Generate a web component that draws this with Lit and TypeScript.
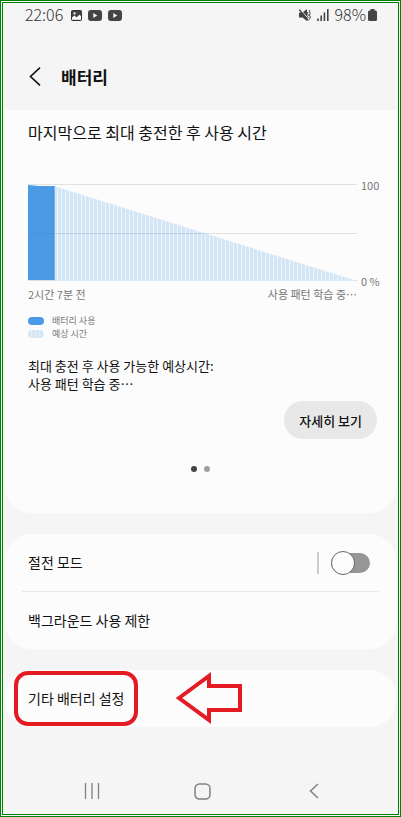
import { LitElement, html, css, svg } from "lit";
import { customElement, state } from "lit/decorators.js";

@customElement("app-root")
export class AppRoot extends LitElement {
  @state() private saving = false;

  static styles = css`
    :host {
      display: block;
      font-family: "Noto Sans CJK KR", "Noto Sans", sans-serif;
      color: #111;
    }
    * { box-sizing: border-box; }
    h1, h2, p { margin: 0; }
    button { font: inherit; color: inherit; border: 0; background: none; padding: 0; cursor: pointer; }
    svg { display: block; flex: none; }
    .screen {
      display: flex;
      flex-direction: column;
      min-height: 100vh;
      border: 3px double #008000;
      background: #f5f5f5;
    }
    .status {
      display: flex;
      align-items: center;
      justify-content: space-between;
      height: 24px;
      padding: 0 21px 0 22px;
      font-size: 16px;
      line-height: 22px;
      font-weight: 300;
      color: #333;
    }
    .group { display: flex; align-items: center; gap: 6px; }
    .time { margin-right: 2px; }
    .time, .percent { padding-bottom: 2px; }
    .level { display: flex; align-items: center; gap: 2px; }
    .header {
      display: flex;
      align-items: center;
      gap: 20px;
      height: 83px;
      padding: 16px 26px 0;
    }
    h1 { font-size: 17px; line-height: 24px; font-weight: 700; }
    main { display: flex; flex-direction: column; gap: 21px; padding: 0 2px; }
    .card { background: #fcfcfc; border-radius: 26px; }
    .usage { border-radius: 0 0 26px 26px; padding: 10px 16px 41px 23px; }
    h2 { font-size: 16px; line-height: 24px; font-weight: 400; }
    .chart {
      display: grid;
      grid-template-columns: 1fr 19px;
      column-gap: 4px;
      margin-top: 40px;
      font-size: 11px;
      line-height: 16px;
      color: #777;
    }
    .plot { width: 100%; height: 99px; }
    .scale {
      display: flex;
      flex-direction: column;
      justify-content: space-between;
      height: 112px;
      margin-top: -7px;
      white-space: nowrap;
    }
    .axis { display: flex; justify-content: space-between; margin-top: -3px; }
    .legend {
      list-style: none;
      margin: 12px 0 0;
      padding: 0;
      font-size: 9px;
      line-height: 13px;
      color: #777;
    }
    .legend li { display: flex; align-items: center; gap: 8px; }
    .swatch { width: 16px; height: 8px; border-radius: 4px; background: #4a9ae6; }
    .swatch.expected { background: repeating-linear-gradient(90deg, #d4e5f4 0 3px, #e6f0f9 3px 4px); }
    .estimate { margin-top: 17px; font-size: 13px; line-height: 18px; }
    .actions { display: flex; justify-content: flex-end; margin-top: 8px; padding-right: 3px; }
    .more {
      height: 38px;
      padding: 0 15px;
      border-radius: 19px;
      background: #e8e8e8;
      font-size: 13px;
      font-weight: 500;
    }
    .dots { display: flex; justify-content: center; gap: 7px; margin-top: 27px; padding-right: 7px; }
    .dot { width: 6px; height: 6px; border-radius: 50%; background: #a0a0a0; }
    .dot.current { background: #444; }
    .row {
      position: relative;
      display: flex;
      align-items: center;
      justify-content: space-between;
      width: 100%;
      height: 57px;
      padding: 0 26px 0 23px;
      font-size: 14px;
      line-height: 20px;
      text-align: left;
    }
    .row > label, .row > .name { padding-bottom: 2px; }
    .rule { height: 1px; margin: 0 17px; background: #e9e9e9; }
    .control { display: flex; align-items: center; gap: 12px; }
    .control::before { content: ""; width: 2px; height: 22px; background: #ccc; }
    .switch {
      appearance: none;
      display: flex;
      align-items: center;
      width: 39px;
      height: 20px;
      margin: 0;
      border-radius: 10px;
      background: #969696;
      cursor: pointer;
    }
    .switch::before {
      content: "";
      width: 22px;
      height: 22px;
      flex: none;
      border: 1px solid #666;
      border-radius: 50%;
      background: #fdfdfd;
    }
    .switch:checked { justify-content: flex-end; background: #4a9ae6; }
    .mark {
      position: absolute;
      left: 9px;
      top: 1px;
      width: 124px;
      height: 55px;
      border: 4px solid #e51b24;
      border-radius: 14px;
      pointer-events: none;
    }
    .arrow { position: absolute; left: 170px; top: 2px; pointer-events: none; }
    nav {
      display: flex;
      justify-content: space-around;
      align-items: center;
      margin-top: auto;
      height: 46px;
      padding: 0 29px 0 34px;
    }
    nav button { display: flex; justify-content: center; width: 40px; }
  `;

  private video() {
    return html`<svg width="14" height="11" viewBox="0 0 14 11" aria-hidden="true">
      <rect width="14" height="11" rx="3" fill="#444" />
      <path d="M5.3 3v5l4-2.5z" fill="#f5f5f5" />
    </svg>`;
  }

  private plot() {
    return html`<svg class="plot" viewBox="0 0 329 99" preserveAspectRatio="none" role="img" aria-label="배터리 사용">
      ${svg`
        <defs>
          <pattern id="stripes" width="4" height="99" patternUnits="userSpaceOnUse">
            <rect width="4" height="99" fill="#ebf4fb" />
            <rect x="2" width="2" height="99" fill="#d4e6f5" />
            <rect width="1" height="99" fill="#d4e6f5" />
          </pattern>
        </defs>
        <path d="M0 .5H329M0 49.500H329M0 96.500H329" stroke="#e2e2e2" />
        <path d="M26 2L329 97H26z" fill="url(#stripes)" />
        <path d="M0 1L11 2H26V96H0z" fill="#4a9ae6" />
        <path d="M26 2V96" stroke="#3c86cc" />
        <path d="M0 49.500H178" stroke="#56789a" stroke-opacity=".2" />
      `}
    </svg>`;
  }

  render() {
    return html`
      <div class="screen">
        <div class="status">
          <div class="group">
            <span class="time">22:06</span>
            <svg width="11" height="11" viewBox="0 0 11 11" aria-hidden="true">
              <rect x=".5" y=".5" width="10" height="10" rx="1" fill="#444" stroke="#333" />
              <circle cx="3.5" cy="3.4" r="1.1" fill="#fff" />
              <path d="M1 9.8V7.5L3.5 5.6L5.6 7.4L8.4 4.8L10 6V9.8z" fill="#fff" />
            </svg>
            ${this.video()} ${this.video()}
          </div>
          <div class="group">
            <svg width="12" height="12" viewBox="0 0 12 12" aria-hidden="true">
              <path d="M0 3.500H3.500L8 0V12L3.500 8.500H0z" fill="#444" />
              <path d="M1.300 .3L10 10.500" stroke="#f5f5f5" />
              <path d="M.3 .7L9.300 11.500" stroke="#444" stroke-width="1.300" />
              <path d="M9 3L8.500 4.500L9.300 6L8.500 7.500L9.200 9M11 1L10.300 2.500L11.300 4.300L10.400 6L11.300 8L10.400 10.500" fill="none" stroke="#444" />
            </svg>
            <svg width="12" height="12" viewBox="0 0 12 12" aria-hidden="true">
              <path d="M1 9.5V12M4.2 6.5V12M7.4 3.5V12M10.8 0V12" stroke="#444" stroke-width="1.6" />
            </svg>
            <span class="level">
              <span class="percent">98%</span>
              <svg width="9" height="12" viewBox="0 0 9 12" aria-hidden="true">
                <path d="M2.5 1.5V0H6.500V1.500H7.500Q9 1.500 9 3V10.500Q9 12 7.500 12H1.500Q0 12 0 10.500V3Q0 1.500 1.500 1.500z" fill="#444" />
              </svg>
            </span>
          </div>
        </div>

        <header class="header">
          <button aria-label="뒤로">
            <svg width="12" height="19" viewBox="0 0 12 19">
              <path d="M11 .7L1.500 9.500L11 18.300" fill="none" stroke="#111" stroke-width="1.600" />
            </svg>
          </button>
          <h1>배터리</h1>
        </header>

        <main>
          <section class="card usage">
            <h2>마지막으로 최대 충전한 후 사용 시간</h2>
            <div class="chart">
              ${this.plot()}
              <div class="scale"><span>100</span><span>0 %</span></div>
              <div class="axis"><span>2시간 7분 전</span><span>사용 패턴 학습 중⋯</span></div>
            </div>
            <ul class="legend">
              <li><span class="swatch"></span>배터리 사용</li>
              <li><span class="swatch expected"></span>예상 시간</li>
            </ul>
            <p class="estimate">최대 충전 후 사용 가능한 예상시간:<br />사용 패턴 학습 중⋯</p>
            <div class="actions"><button class="more">자세히 보기</button></div>
            <div class="dots"><span class="dot current"></span><span class="dot"></span></div>
          </section>

          <section class="card">
            <div class="row">
              <label for="saving">절전 모드</label>
              <span class="control">
                <input
                  id="saving"
                  class="switch"
                  type="checkbox"
                  role="switch"
                  .checked=${this.saving}
                  @change=${(e: Event) => (this.saving = (e.target as HTMLInputElement).checked)}
                />
              </span>
            </div>
            <div class="rule"></div>
            <button class="row"><span class="name">백그라운드 사용 제한</span></button>
          </section>

          <section class="card">
            <button class="row">
              <span class="name">기타 배터리 설정</span>
              <span class="mark"></span>
              <svg class="arrow" width="70" height="54" viewBox="0 0 70 54" aria-hidden="true">
                <path d="M4 26L34 4V14H65V38H34V48z" fill="none" stroke="#e51b24" stroke-width="4" />
              </svg>
            </button>
          </section>
        </main>

        <nav>
          <button aria-label="최근 앱">
            <svg width="16" height="16" viewBox="0 0 16 16">
              <path d="M1.500 0V16M8 0V16M14.500 0V16" stroke="#808080" stroke-width="1.300" />
            </svg>
          </button>
          <button aria-label="홈">
            <svg width="17" height="17" viewBox="0 0 17 17">
              <rect x="1" y="1" width="15" height="15" rx="4.500" fill="none" stroke="#808080" stroke-width="1.500" />
            </svg>
          </button>
          <button aria-label="이전">
            <svg width="10" height="16" viewBox="0 0 10 16">
              <path d="M9 1L1.500 8L9 15" fill="none" stroke="#808080" stroke-width="1.500" />
            </svg>
          </button>
        </nav>
      </div>
    `;
  }
}
